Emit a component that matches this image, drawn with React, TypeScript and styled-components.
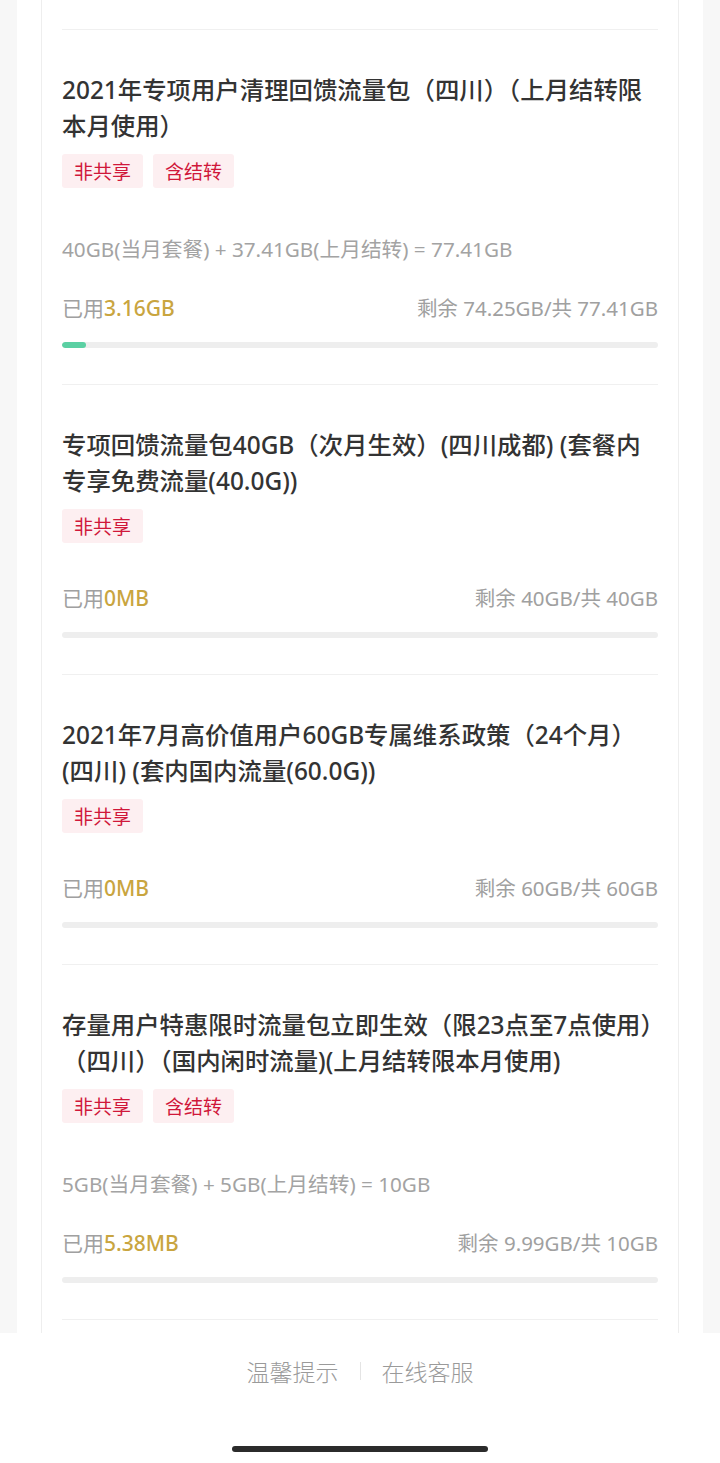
import styled, { createGlobalStyle } from 'styled-components';

const GlobalStyle = createGlobalStyle`
  html, body {
    margin: 0;
    padding: 0;
    background: #ffffff;
  }
  body {
    font-family: "Noto Sans", "Noto Sans CJK SC", sans-serif;
  }
`;

type FlowPackage = {
  title: string;
  tags: string[];
  formula?: string;
  used: string;
  usedMb: number;
  remain: string;
  total: string;
  totalMb: number;
};

const packages: FlowPackage[] = [
  {
    title: '2021年专项用户清理回馈流量包（四川）（上月结转限本月使用）',
    tags: ['非共享', '含结转'],
    formula: '40GB(当月套餐) + 37.41GB(上月结转) = 77.41GB',
    used: '3.16GB',
    usedMb: 3.16 * 1024,
    remain: '74.25GB',
    total: '77.41GB',
    totalMb: 77.41 * 1024,
  },
  {
    title: '专项回馈流量包40GB（次月生效）(四川成都) (套餐内专享免费流量(40.0G))',
    tags: ['非共享'],
    used: '0MB',
    usedMb: 0,
    remain: '40GB',
    total: '40GB',
    totalMb: 40 * 1024,
  },
  {
    title: '2021年7月高价值用户60GB专属维系政策（24个月）(四川) (套内国内流量(60.0G))',
    tags: ['非共享'],
    used: '0MB',
    usedMb: 0,
    remain: '60GB',
    total: '60GB',
    totalMb: 60 * 1024,
  },
  {
    title: '存量用户特惠限时流量包立即生效（限23点至7点使用）（四川）（国内闲时流量)(上月结转限本月使用)',
    tags: ['非共享', '含结转'],
    formula: '5GB(当月套餐) + 5GB(上月结转) = 10GB',
    used: '5.38MB',
    usedMb: 5.38,
    remain: '9.99GB',
    total: '10GB',
    totalMb: 10 * 1024,
  },
];

const Screen = styled.div`
  height: 1463px;
  display: flex;
  flex-direction: column;
  overflow: hidden;
  background: #ffffff;
`;

const Scroll = styled.div`
  flex: 1;
  overflow: hidden;
  background: #f7f7f7;
  padding: 0 17px;
`;

const Panel = styled.div`
  background: #ffffff;
  padding: 0 24px;
  height: 100%;
`;

const Card = styled.div`
  height: 100%;
  box-sizing: border-box;
  border-left: 1px solid #eeeeee;
  border-right: 1px solid #eeeeee;
  padding: 29px 20px 0;
`;

const List = styled.div`
  border-bottom: 1px solid #f0f0f0;
`;

const Item = styled.div`
  border-top: 1px solid #f0f0f0;
  padding: 42px 0 36px;
`;

const Title = styled.h3`
  margin: 0;
  font-size: 24.4px;
  line-height: 36px;
  font-weight: 500;
  color: #333333;
`;

const Tags = styled.div`
  display: flex;
  gap: 10px;
  margin-top: 10px;
`;

const Tag = styled.span`
  height: 34px;
  line-height: 34px;
  padding: 0 12px;
  border-radius: 3px;
  background: #fdeff1;
  color: #d0173a;
  font-size: 19px;
  font-family: "Noto Sans CJK SC", sans-serif;
`;

const Formula = styled.div`
  margin-top: 46px;
  font-size: 20.7px;
  line-height: 30px;
  color: #a3a3a3;
`;

const UsageRow = styled.div<{ $afterFormula?: boolean }>`
  display: flex;
  justify-content: space-between;
  align-items: center;
  margin-top: ${(p) => (p.$afterFormula ? 29 : 40)}px;
  font-size: 21px;
  line-height: 30px;
  color: #a0a0a0;
`;

const Remain = styled.span`
  font-size: 20.5px;
`;

const UsedValue = styled.span`
  color: #c9a53f;
  font-weight: 500;
`;

const Track = styled.div`
  margin-top: 19px;
  height: 6px;
  border-radius: 3px;
  background: #eeeeee;
  overflow: hidden;
`;

const Fill = styled.div`
  height: 100%;
  border-radius: 3px;
  background: #5bd0a3;
`;

const Footer = styled.footer`
  height: 130px;
  flex-shrink: 0;
  background: #ffffff;
  display: flex;
  flex-direction: column;
  align-items: center;
  padding-top: 23px;
  box-sizing: border-box;
`;

const Links = styled.div`
  display: flex;
  align-items: center;
  font-family: "Noto Sans CJK SC", sans-serif;
  font-size: 23px;
  line-height: 30px;
  font-weight: 300;
  color: #9a9a9a;
`;

const LinkDivider = styled.span`
  width: 1px;
  height: 18px;
  margin: 0 21px;
  background: #e4e4e4;
`;

const HomeBar = styled.div`
  margin-top: 60px;
  width: 256px;
  height: 6px;
  border-radius: 3px;
  background: #2b2b2b;
`;

// progress in whole pixels of the 596px track, so a few MB of 10GB draws nothing
const usedPercent = (pkg: FlowPackage) =>
  (Math.floor((pkg.usedMb / pkg.totalMb) * 596) / 596) * 100;

export default function App() {
  return (
    <Screen>
      <GlobalStyle />
      <Scroll>
        <Panel>
          <Card>
            <List>
              {packages.map((pkg) => (
                <Item key={pkg.title}>
                  <Title>{pkg.title}</Title>
                  <Tags>
                    {pkg.tags.map((t) => (
                      <Tag key={t}>{t}</Tag>
                    ))}
                  </Tags>
                  {pkg.formula && <Formula>{pkg.formula}</Formula>}
                  <UsageRow $afterFormula={!!pkg.formula}>
                    <span>
                      已用<UsedValue>{pkg.used}</UsedValue>
                    </span>
                    <Remain>
                      剩余 {pkg.remain}/共 {pkg.total}
                    </Remain>
                  </UsageRow>
                  <Track>
                    <Fill style={{ width: `${usedPercent(pkg)}%` }} />
                  </Track>
                </Item>
              ))}
            </List>
          </Card>
        </Panel>
      </Scroll>
      <Footer>
        <Links>
          <span>温馨提示</span>
          <LinkDivider />
          <span>在线客服</span>
        </Links>
        <HomeBar />
      </Footer>
    </Screen>
  );
}
